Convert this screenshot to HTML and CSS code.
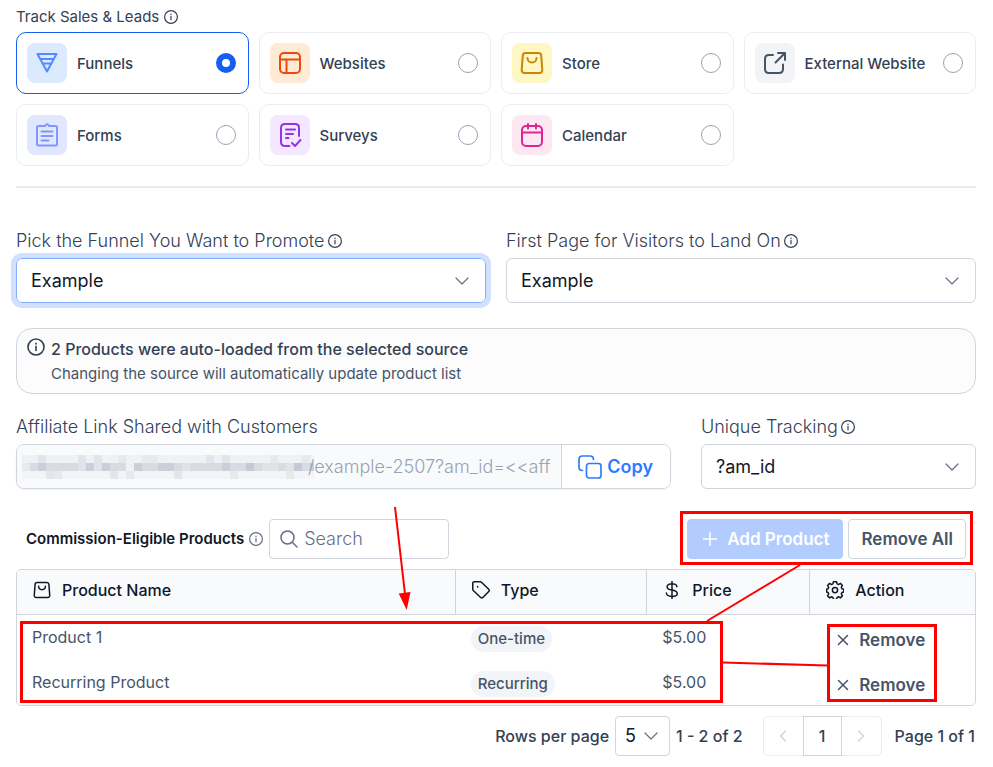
FILE: index.html
```html
<!DOCTYPE html>
<html lang="en">
<head>
  <meta charset="UTF-8" />
  <meta name="viewport" content="width=device-width, initial-scale=1" />
  <title>Affiliate Campaign Products</title>
  <link rel="stylesheet" href="styles.css">
</head>
<body>
  <!-- shared icons -->
  <svg class="sprite" aria-hidden="true">
    <symbol id="info" viewBox="0 0 16 16">
      <circle cx="8" cy="8" r="6.4" />
      <path d="M8 7.4v3.4M8 5v.6" />
    </symbol>
    <symbol id="chevron" viewBox="0 0 16 16">
      <path d="M2 5l6 6 6-6" />
    </symbol>
    <symbol id="bag" viewBox="0 0 24 24">
      <path d="M5.500 2h13q2.500 0 2.700 2.500l1.100 14.500q.1 3-3 3H4.700q-3.100 0-3-3L2.800 4.500q.2-2.500 2.700-2.500z" />
      <path d="M7.500 7c0 6 9 6 9 0" />
    </symbol>
    <symbol id="close" viewBox="0 0 12 12">
      <path d="M1.500 1.500l9 9M10.500 1.500l-9 9" />
    </symbol>
  </svg>

  <main class="page">
    <fieldset class="sources">
      <legend>Track Sales &amp; Leads <svg class="info"><use href="#info" /></svg></legend>
      <div class="source-grid">
        <label class="source active">
          <span class="tile blue"><svg viewBox="0 0 24 24"><path d="M2.500 3h19L12 20.500zM5.500 8h13M8.300 12.500h7.400" /></svg></span>
          <span class="source-name">Funnels</span>
          <input type="radio" name="source" checked />
        </label>
        <label class="source">
          <span class="tile orange"><svg viewBox="0 0 24 24"><rect x="2" y="2" width="20" height="20" rx="4" /><path d="M2 8.500h20M8.500 8.500V22" /></svg></span>
          <span class="source-name">Websites</span>
          <input type="radio" name="source" />
        </label>
        <label class="source">
          <span class="tile yellow"><svg><use href="#bag" /></svg></span>
          <span class="source-name">Store</span>
          <input type="radio" name="source" />
        </label>
        <label class="source">
          <span class="tile gray"><svg viewBox="0 0 24 24"><path d="M10 4H6Q2 4 2 8v10q0 4 4 4h10q4 0 4-4v-4.500M15 2h7v7M21.500 2.500L12.500 11.500" /></svg></span>
          <span class="source-name">External Website</span>
          <input type="radio" name="source" />
        </label>
        <label class="source">
          <span class="tile indigo"><svg viewBox="0 0 24 24"><path d="M8 3H3.500Q2 3 2 4.500V21q0 1.500 1.500 1.500h17Q22 22.500 22 21V4.500Q22 3 20.500 3H16M8 3h2Q12-.500 14 3h2M6.500 8.500h11M6.500 13h11M6.500 17.500h7" /></svg></span>
          <span class="source-name">Forms</span>
          <input type="radio" name="source" />
        </label>
        <label class="source">
          <span class="tile purple"><svg viewBox="0 0 24 24"><path d="M11.500 23H7q-4 0-4-4V5q0-4 4-4h10q4 0 4 4v8M8 6.500h9M8 11h7M8 15h2.500M14 20l3 3 5.500-6" /></svg></span>
          <span class="source-name">Surveys</span>
          <input type="radio" name="source" />
        </label>
        <label class="source">
          <span class="tile pink"><svg viewBox="0 0 24 24"><rect x="2" y="3" width="20" height="20" rx="4" /><path d="M2 9.500h20M8 1v4.500M16 1v4.500" /></svg></span>
          <span class="source-name">Calendar</span>
          <input type="radio" name="source" />
        </label>
      </div>
    </fieldset>

    <hr class="divider" />

    <div class="fields">
      <div class="field">
        <label for="funnel">Pick the Funnel You Want to Promote <svg class="info"><use href="#info" /></svg></label>
        <div class="select focused">
          <select id="funnel"><option>Example</option></select>
          <svg class="chevron"><use href="#chevron" /></svg>
        </div>
      </div>
      <div class="field">
        <label for="landing">First Page for Visitors to Land On <svg class="info"><use href="#info" /></svg></label>
        <div class="select">
          <select id="landing"><option>Example</option></select>
          <svg class="chevron"><use href="#chevron" /></svg>
        </div>
      </div>
    </div>

    <div class="notice">
      <svg class="notice-icon"><use href="#info" /></svg>
      <div>
        <p class="notice-title">2 Products were auto-loaded from the selected source</p>
        <p class="notice-text">Changing the source will automatically update product list</p>
      </div>
    </div>

    <div class="fields link-fields">
      <div class="field">
        <label for="link">Affiliate Link Shared with Customers</label>
        <div class="link-group">
          <div class="link-box">
            <!-- hidden domain -->
            <svg class="mosaic" viewBox="0 0 292 24" shape-rendering="crispEdges" aria-hidden="true">
              <path stroke="#f0f1f4" d="M0 4h292" />
              <path stroke="#d9dbe1" d="M0 12h292" />
              <path stroke="#f3f4f7" d="M0 20h292" />
              <path stroke="#e2e5ec" d="M16 4h8M56 4h8M72 4h8M184 4h8M200 4h8M24 20h8M88 20h8M152 20h8" />
              <path stroke="#e8e9ed" d="M0 12h8M96 4h8M120 4h16M248 4h8M280 4h8M32 20h8M104 20h8M208 20h8M264 20h8" />
              <path stroke="#cccfd9" d="M16 12h8M64 12h8M80 12h8M112 12h8M136 12h16M200 12h8M224 12h8" />
              <path stroke="#c5cadb" d="M224 12h8M272 12h8M288 12h4" />
              <path stroke="#e2e3e7" d="M56 12h8M72 12h8M160 12h8M240 12h16M264 12h8" />
              <path stroke="#f0f1f3" d="M104 12h8" />
            </svg>
            <input id="link" type="text" value="/example-2507?am_id=&lt;&lt;aff" readonly />
          </div>
          <button class="copy" type="button">
            <svg viewBox="0 0 24 24"><rect x="8.500" y="8.500" width="14.500" height="14.500" rx="2.500" /><path d="M4.500 15.500Q1 15.500 1 12V4.500Q1 1 4.500 1H12q3.500 0 3.500 3.500" /></svg>
            Copy
          </button>
        </div>
      </div>
      <div class="field">
        <label for="tracking">Unique Tracking <svg class="info"><use href="#info" /></svg></label>
        <div class="select">
          <select id="tracking"><option>?am_id</option></select>
          <svg class="chevron"><use href="#chevron" /></svg>
        </div>
      </div>
    </div>

    <section>
      <div class="toolbar">
        <h2>Commission-Eligible Products <svg class="info"><use href="#info" /></svg></h2>
        <label class="search">
          <svg viewBox="0 0 18 18"><circle cx="7.500" cy="7.500" r="6.500" /><path d="M12.300 12.300L17 17" /></svg>
          <input type="search" placeholder="Search" aria-label="Search products" />
        </label>
        <div class="toolbar-actions">
          <button class="btn primary" type="button" disabled>
            <svg viewBox="0 0 14 14"><path d="M7 .500v13M.500 7h13" /></svg>
            Add Product
          </button>
          <button class="btn" type="button">Remove All</button>
        </div>
      </div>

      <div class="table-wrap">
        <table>
          <colgroup>
            <col class="col-name" /><col class="col-type" /><col class="col-price" /><col />
          </colgroup>
          <thead>
            <tr>
              <th><span class="th"><svg><use href="#bag" /></svg>Product Name</span></th>
              <th><span class="th"><svg viewBox="0 0 24 24"><path d="M1 3Q1 1 3 1h7.700q1.300 0 2.300 1l9 8.700q1.800 1.800 0 3.600l-7.200 7.400q-1.800 1.800-3.600 0L2 13Q1 12 1 10.700zM7.500 7.300v.700" /></svg>Type</span></th>
              <th><span class="th"><svg viewBox="0 0 24 24"><path d="M12 .500v23M18.500 7.500q-.500-4-6.500-4t-6.500 4q0 3.500 6.500 4.500t7 4.500q0 4-7 4t-7.500-4.500" /></svg>Price</span></th>
              <th><span class="th"><svg viewBox="0 0 24 24"><circle cx="12" cy="12" r="3.500" /><path d="M9.900 1h4.200l.7 2.900 1.800.8 2.600-1.500 2.700 2.700-1.500 2.600.8 1.800 2.500.7v3.600l-2.500.7-.8 1.900 1.500 2.600-2.700 2.700-2.600-1.500-1.800.8-.7 2.700H9.900l-.7-2.700-1.800-.8-2.600 1.500-2.700-2.700 1.500-2.600-.8-1.900-2-.7v-3.600l2-.7.8-1.800-1.500-2.600 2.700-2.700 2.600 1.500 1.800-.8z" /></svg>Action</span></th>
            </tr>
          </thead>
          <tbody>
            <tr>
              <td>Product 1</td>
              <td><span class="badge">One-time</span></td>
              <td>$5.00</td>
              <td><button class="remove" type="button"><svg><use href="#close" /></svg>Remove</button></td>
            </tr>
            <tr>
              <td>Recurring Product</td>
              <td><span class="badge">Recurring</span></td>
              <td>$5.00</td>
              <td><button class="remove" type="button"><svg><use href="#close" /></svg>Remove</button></td>
            </tr>
          </tbody>
        </table>
      </div>

      <div class="pagination">
        <label for="rows">Rows per page</label>
        <div class="select small">
          <select id="rows"><option>5</option></select>
          <svg class="chevron"><use href="#chevron" /></svg>
        </div>
        <span>1 - 2 of 2</span>
        <div class="pager">
          <button type="button" aria-label="Previous page" disabled><svg viewBox="0 0 16 16"><path d="M10.500 3l-5 5 5 5" /></svg></button>
          <button class="current" type="button">1</button>
          <button type="button" aria-label="Next page" disabled><svg viewBox="0 0 16 16"><path d="M5.500 3l5 5-5 5" /></svg></button>
        </div>
        <span>Page 1 of 1</span>
      </div>
    </section>

    <!-- red callouts drawn over the page -->
    <svg class="callouts" viewBox="0 0 993 767" aria-hidden="true">
      <rect x="681.500" y="512.500" width="290" height="51" />
      <rect x="21.500" y="622.500" width="700" height="79" />
      <rect x="828.500" y="625.500" width="107" height="75" />
      <path class="line" d="M800 565L707 621M723 662.500L827 665.500M395 507L405 594" />
      <path class="head" d="M398.700 593.500L410.500 592L406.700 610z" />
    </svg>
  </main>
</body>
</html>
```

FILE: styles.css
```css
* { box-sizing: border-box; }
body { margin: 0; background: #fff; color: #344054; font-family: Inter, "Liberation Sans", sans-serif; font-size: 16px; line-height: 24px; }
svg { fill: none; stroke: currentColor; stroke-linecap: round; stroke-linejoin: round; flex: none; }
button, input, select { font: inherit; color: inherit; margin: 0; }
p, h2 { margin: 0; }
.sprite { display: none; }
.page { position: relative; padding: 5px 17px 0 16px; }
.info { width: 16px; height: 16px; stroke-width: 1.2; }

/* sources */
.sources { border: 0; margin: 0; padding: 0; min-width: 0; }
.sources legend { display: flex; align-items: center; gap: 4px; padding: 0; margin-bottom: 3px; font-size: 15px; }
.source-grid { display: grid; grid-template-columns: repeat(4, 1fr); gap: 10px; }
.source { display: flex; align-items: center; gap: 10px; height: 62px; padding: 0 12px 0 10px; border: 1px solid #eaecf0; border-radius: 10px; font-weight: 500; }
.source.active { border-color: #155eef; }
.source-name { flex: 1; padding-top: 2px; font-size: 15px; white-space: nowrap; }
.source input { appearance: none; width: 20px; height: 20px; border: 1px solid #98a2b3; border-radius: 50%; background: #fff; }
.source input:checked { border: 6px solid #155eef; }
.tile { display: flex; align-items: center; justify-content: center; width: 40px; height: 40px; border-radius: 8px; }
.tile svg { width: 24px; height: 24px; stroke-width: 2; }
.blue { background: #dbeafe; color: #528bff; }
.orange { background: #ffead5; color: #ec4a0a; }
.yellow { background: #fef7c3; color: #ca8504; }
.gray { background: #f2f4f7; color: #475467; }
.indigo { background: #e0e7ff; color: #8098f9; }
.purple { background: #f3e8ff; color: #9333ea; }
.pink { background: #fce7f3; color: #dd2590; }

.divider { height: 2px; margin: 20px 0 40px; border: 0; background: #eaecf0; }

/* fields */
.fields { display: grid; grid-template-columns: 1fr 1fr; gap: 20px; }
.link-fields { grid-template-columns: 655fr 275fr; gap: 30px; }
.field { min-width: 0; }
.field > label { display: flex; align-items: center; gap: 2px; height: 26px; margin-bottom: 4px; font-size: 18px; font-weight: 350; white-space: nowrap; }
.select { position: relative; height: 45px; }
.select select { appearance: none; width: 100%; height: 100%; padding: 0 40px 0 14px; border: 1px solid #d0d5dd; border-radius: 6px; background: #fff; color: #101828; font-size: 18px; font-weight: 400; }
.select.focused select { border-color: #84adff; outline: 5px solid #d1e0ff; }
.chevron { position: absolute; right: 16px; top: 50%; width: 16px; height: 16px; margin-top: -8px; color: #667085; stroke-width: 1.2; pointer-events: none; }

.notice { display: flex; gap: 5px; height: 66px; margin: 25px 0 20px; padding: 8px 9px; border: 1px solid #d0d5dd; border-radius: 16px; background: #fcfcfd; }
.notice-icon { width: 20px; height: 20px; stroke-width: 1.3; }
.notice-title { font-weight: 500; }
.notice-text { color: #475467; font-size: 15px; line-height: 26px; }

.link-group { display: flex; height: 45px; border: 1px solid #d0d5dd; border-radius: 8px; box-shadow: 0 1px 2px #1018280d; overflow: hidden; }
.link-box { display: flex; align-items: center; flex: 1; min-width: 0; padding-left: 5px; background: #f9fafb; }
.mosaic { width: 292px; height: 24px; margin-right: -6px; stroke-width: 8; stroke-linecap: butt; }
.link-box input { flex: 1; min-width: 0; padding: 0; border: 0; background: none; color: #98a2b3; font-size: 18px; font-weight: 350; }
.copy { display: flex; align-items: center; gap: 5px; padding: 0 17px 0 16px; border: 0; border-left: 1px solid #d0d5dd; background: #fff; color: #2e7bff; font-size: 18px; font-weight: 600; }
.copy svg { width: 24px; height: 24px; stroke-width: 1.7; }

/* toolbar */
.toolbar { display: flex; align-items: center; height: 40px; margin: 30px 10px 10px; }
.toolbar h2 { display: flex; align-items: center; gap: 4px; color: #101828; font-size: 15px; font-weight: 600; white-space: nowrap; }
.toolbar h2 .info { color: #667085; }
.search { display: flex; align-items: center; gap: 6px; width: 180px; height: 40px; margin-left: 5px; padding: 0 10px; border: 1px solid #d0d5dd; border-radius: 4px; color: #667085; }
.search svg { width: 18px; height: 18px; stroke-width: 1.5; }
.search input { width: 100%; min-width: 0; padding: 0; border: 0; background: none; font-size: 18px; font-weight: 350; }
.search input::placeholder { color: #667085; }
.toolbar-actions { display: flex; gap: 5px; margin-left: auto; }
.btn { display: flex; align-items: center; gap: 10px; height: 40px; padding: 0 12px; border: 1px solid #d0d5dd; border-radius: 4px; background: #fff; color: #475467; font-size: 17px; font-weight: 600; white-space: nowrap; }
.btn.primary { padding: 0 13px 0 15px; border-color: #b2ccff; background: #b2ccff; color: #fff; }
.btn svg { width: 14px; height: 14px; stroke-width: 1.5; }

/* table */
.table-wrap { border: 1px solid #d0d5dd; border-radius: 5px; overflow: hidden; }
table { width: 100%; border-collapse: separate; border-spacing: 0; table-layout: fixed; }
.col-name { width: 45.8%; }
.col-type { width: 20%; }
.col-price { width: 17%; }
th { height: 45px; padding: 0 16px 4px; border-right: 1px solid #d0d5dd; border-bottom: 1px solid #d0d5dd; background: #f9fafb; color: #101828; font-weight: 500; text-align: left; }
th:last-child { border-right: 0; }
.th { display: flex; align-items: center; gap: 11px; }
.th svg { width: 18px; height: 18px; stroke-width: 2; }
td { height: 45px; padding: 0 15px 2px; color: #475467; vertical-align: middle; }
.badge { display: inline-block; margin-top: 4px; padding: 1px 7px; border-radius: 13px; background: #f2f4f7; font-size: 15px; font-weight: 500; }
.remove { display: flex; align-items: center; gap: 10px; margin-top: 6px; padding: 0 12px; border: 0; background: none; color: #475467; font-size: 17px; font-weight: 600; }
.remove svg { width: 12px; height: 12px; stroke-width: 1.5; }

/* pagination */
.pagination { display: flex; align-items: center; justify-content: flex-end; gap: 6px; margin-top: 10px; padding-right: 1px; font-weight: 450; }
.pagination .small { width: 55px; height: 40px; }
.small select { padding: 0 0 0 9px; border-radius: 4px; }
.small .chevron { right: 11px; }
.pager { display: flex; margin: 0 7px 0 14px; border: 1px solid #eaecf0; border-radius: 5px; }
.pager button { display: flex; align-items: center; justify-content: center; width: 39px; height: 38px; padding: 0; border: 0; background: none; color: #d0d5dd; }
.pager .current { height: 40px; margin: -1px 0; border: 1px solid #d0d5dd; color: #344054; font-weight: 500; }
.pager svg { width: 16px; height: 16px; stroke-width: 1.5; }

.callouts { position: absolute; top: 0; left: 0; width: 993px; height: 767px; stroke: #f00; stroke-width: 3; stroke-linecap: butt; stroke-linejoin: miter; pointer-events: none; }
.callouts .line { stroke-width: 2; }
.callouts .head { fill: #f00; stroke: none; }
```
